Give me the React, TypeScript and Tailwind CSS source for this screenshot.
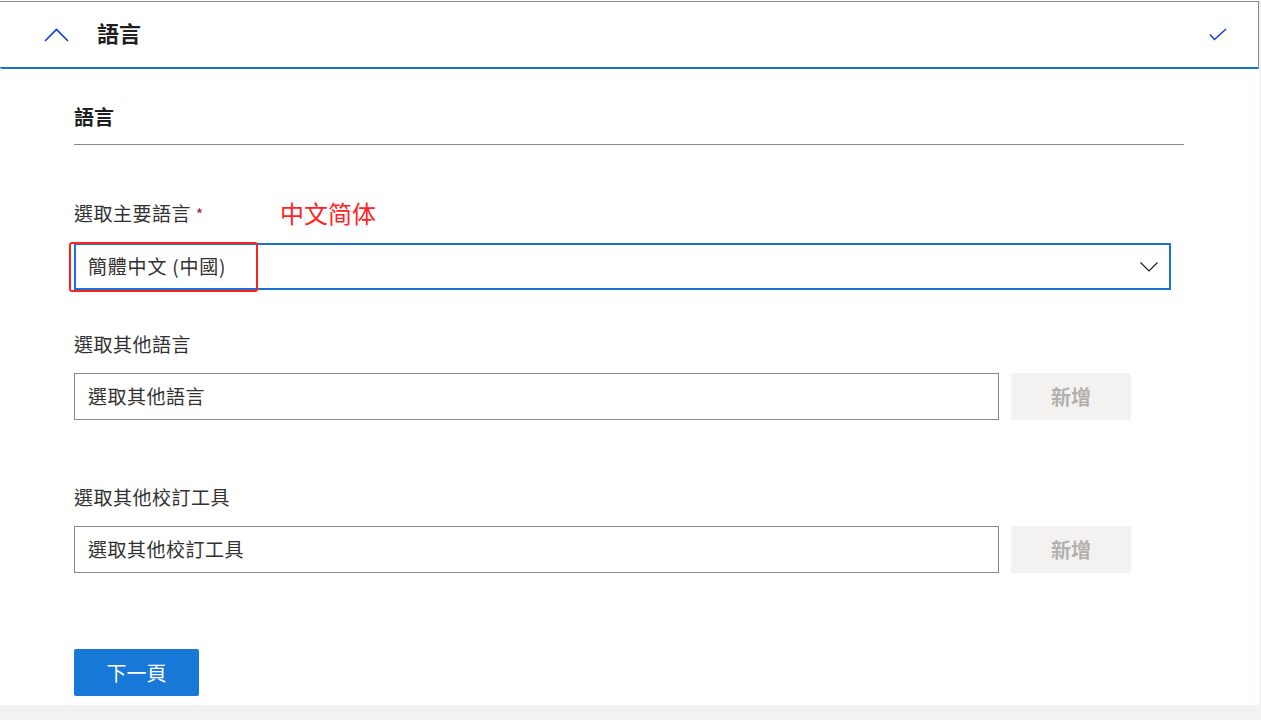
const font = { fontFamily: '"Noto Sans CJK TC", "Noto Sans", sans-serif' };

const AddButton = () => (
  <button
    disabled
    className="w-[120px] h-[47px] rounded-[2px] bg-[#f3f2f1] text-[#b3b0ad] text-[20px] font-bold"
  >
    新增
  </button>
);

const App = () => {
  return (
    <div className="w-[1261px] h-[720px] bg-[#f3f2f1] overflow-hidden text-[#323130]" style={font}>
      <div className="w-[1259px] h-[705px] bg-white pt-px">
        {/* header */}
        <div className="h-[68px] flex items-center border-t border-r border-[#8a8886] border-b-2 border-b-[#1a73d2] rounded-bl-[2px]">
          <svg width="25" height="14" viewBox="0 0 25 14" className="ml-[44px]">
            <polyline points="1,13 12.5,1.5 24,13" fill="none" stroke="#0b3fe0" strokeWidth="1.6" />
          </svg>
          <span className="ml-[28px] mb-[5px] text-[22px] font-bold text-[#201f1e] leading-none">語言</span>
          <svg width="18" height="13" viewBox="0 0 18 13" className="ml-auto mr-[31px]">
            <polyline points="1,6.5 5.5,11.5 17,1" fill="none" stroke="#0b3fe0" strokeWidth="1.5" />
          </svg>
        </div>

        <div className="pl-[74px]">
          <div className="mt-[34px] h-[28px] text-[20px] font-bold leading-[28px] text-[#201f1e]">語言</div>
          <div className="mt-[13px] w-[1110px] h-px bg-[#8a8886]" />

          <div className="relative mt-[55px] h-[26px] text-[19px] leading-[26px] tracking-[0.5px]">
            選取主要語言 <span className="text-[#a4262c] text-[16px]">*</span>
            <span
              className="absolute left-[206px] top-[-4px] text-[24px] leading-[34px] tracking-normal text-[#ff2424]"
              style={{ fontFamily: '"Noto Sans CJK SC", sans-serif' }}
            >
              中文简体
            </span>
          </div>
          <div className="relative mt-[17px] w-[1097px] h-[47px] border-2 border-[#1a73d2] flex items-center pl-[12px] text-[19px] tracking-[0.8px]">
            簡體中文 (中國)
            <svg width="18" height="10" viewBox="0 0 18 10" className="ml-auto mr-[11px]">
              <polyline points="0.5,0.5 9,9 17.5,0.5" fill="none" stroke="#201f1e" strokeWidth="1.2" />
            </svg>
            <div className="absolute left-[-7px] top-[-3px] w-[189px] h-[50px] border-[2.5px] border-[#ff2020] rounded-[3px]" />
          </div>

          <div className="mt-[41px] h-[26px] text-[19px] leading-[26px] tracking-[0.5px]">選取其他語言</div>
          <div className="mt-[16px] flex gap-[12px]">
            <div className="w-[925px] h-[47px] border border-[#8a8886] flex items-center pl-[13px] text-[19px] tracking-[0.5px]">
              選取其他語言
            </div>
            <AddButton />
          </div>

          <div className="mt-[64px] h-[26px] text-[19px] leading-[26px] tracking-[0.5px]">選取其他校訂工具</div>
          <div className="mt-[16px] flex gap-[12px]">
            <div className="w-[925px] h-[47px] border border-[#8a8886] flex items-center pl-[13px] text-[19px] tracking-[0.5px]">
              選取其他校訂工具
            </div>
            <AddButton />
          </div>

          <button className="mt-[76px] w-[125px] h-[47px] rounded-[2px] bg-[#1778d8] text-white text-[20px]">
            下一頁
          </button>
        </div>
      </div>
    </div>
  );
};

export default App;
